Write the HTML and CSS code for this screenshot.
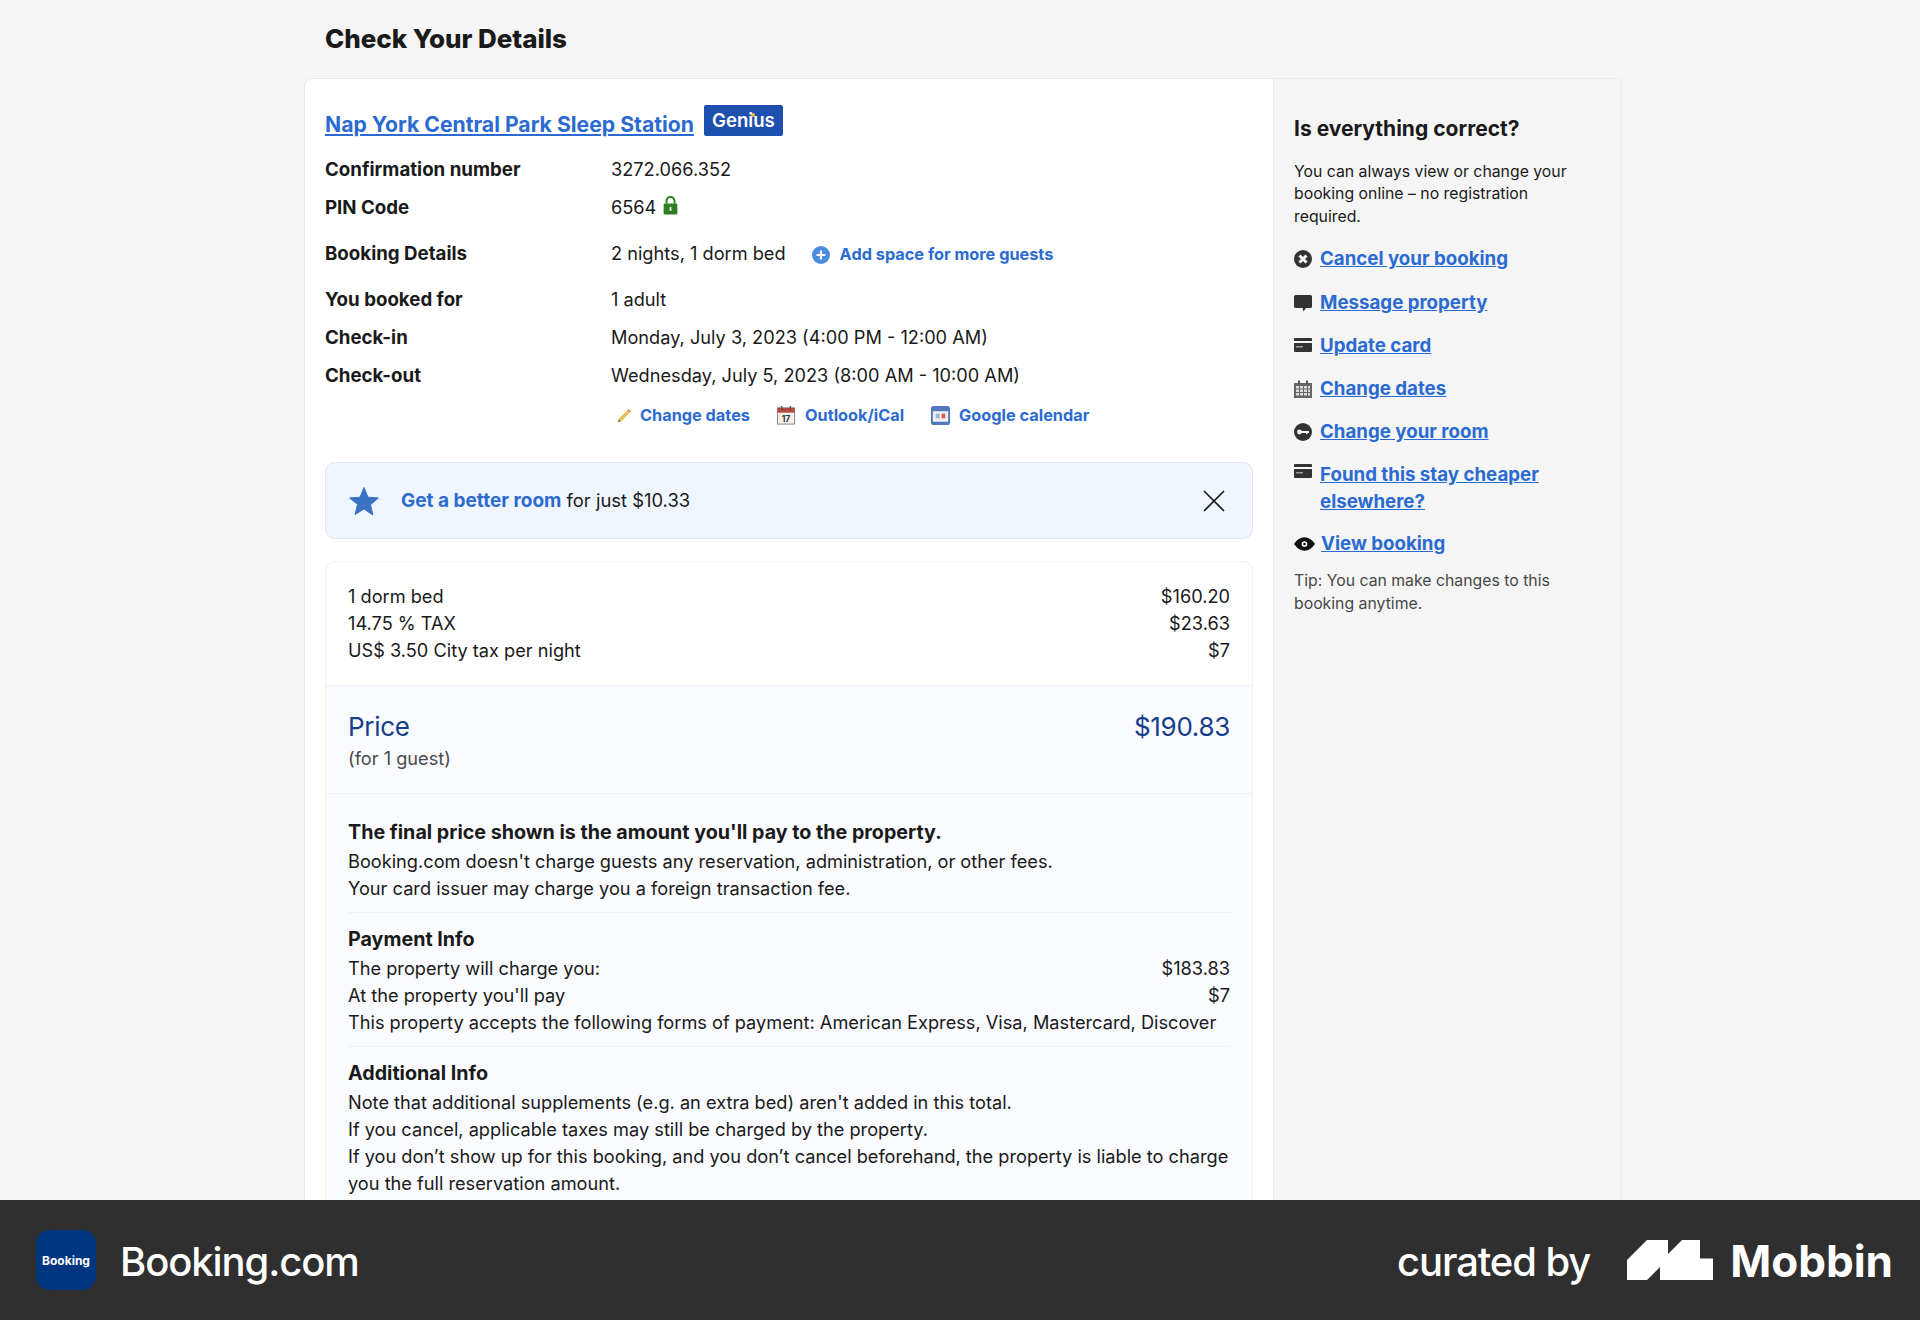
FILE: index.html
```html
<!DOCTYPE html>
<html lang="en">
<head>
  <meta charset="UTF-8">
  <title>Check Your Details</title>
  <link rel="stylesheet" href="styles.css">
</head>
<body>
  <main class="page">
    <h1 class="page-title">Check Your Details</h1>
    <div class="card">
      <section class="details">
        <div class="hotel">
          <a href="#" class="hotel-name">Nap York Central Park Sleep Station</a>
          <span class="genius">Genius<i class="genius-dot"></i></span>
        </div>

        <div class="row"><b>Confirmation number</b><span>3272.066.352</span></div>
        <div class="row"><b>PIN Code</b>
          <span class="inline">6564
            <svg class="lock" viewBox="0 0 14 18"><path d="M3.2 7V4.8a3.8 3.8 0 0 1 7.6 0V7" fill="none" stroke="#2f7d23" stroke-width="1.9"/><rect x="0.5" y="7" width="13" height="10.5" rx="1.2" fill="#2f7d23"/><rect x="6.2" y="10.5" width="1.6" height="3.6" fill="#fff"/></svg>
          </span>
        </div>
        <div class="row row-tall"><b>Booking Details</b>
          <span class="inline">2 nights, 1 dorm bed
            <a href="#" class="mini-link add-space">
              <svg class="plus" viewBox="0 0 18 18"><circle cx="9" cy="9" r="9" fill="#4b8be2"/><path d="M9 4.5v9M4.5 9h9" stroke="#fff" stroke-width="2.2"/></svg>
              Add space for more guests
            </a>
          </span>
        </div>
        <div class="row row-short"><b>You booked for</b><span>1 adult</span></div>
        <div class="row"><b>Check-in</b><span>Monday, July 3, 2023 (4:00 PM - 12:00 AM)</span></div>
        <div class="row"><b>Check-out</b><span>Wednesday, July 5, 2023 (8:00 AM - 10:00 AM)</span></div>

        <div class="actions">
          <a href="#" class="mini-link">
            <svg class="pencil" viewBox="0 0 16 16"><path d="M2.2 11.2 11.4 2l2.6 2.6-9.2 9.2-3.6 1z" fill="#e9bd52"/><path d="M11.4 2l1-1 2.6 2.6-1 1z" fill="#d77a5c"/><path d="M1.2 14.8l.7-2.6 1.9 1.9z" fill="#5b4a32"/></svg>
            Change dates
          </a>
          <a href="#" class="mini-link">
            <svg class="cal" viewBox="0 0 22 22"><rect x="1.5" y="3" width="18" height="17" fill="#f2efec" stroke="#8c8580"/><rect x="1.5" y="3" width="18" height="5" fill="#b5473c"/><path d="M6 1v4M15 1v4" stroke="#555" stroke-width="1.4"/><text x="10.5" y="17.5" class="cal-num">17</text></svg>
            Outlook/iCal
          </a>
          <a href="#" class="mini-link">
            <svg class="cal" viewBox="0 0 22 22"><rect x="1" y="1" width="20" height="20" rx="3" fill="#4f78bf"/><rect x="3" y="6.5" width="16" height="11" fill="#eef1f6"/><rect x="6" y="9" width="4" height="5" fill="#9db4d8"/><rect x="12" y="9" width="4" height="5" fill="#d9604c"/></svg>
            Google calendar
          </a>
        </div>

        <div class="upsell">
          <svg class="star" viewBox="0 0 30 30"><path d="M15 1.5l4 9.7 10.4.8-7.9 6.800 2.400 10.200L15 23l-8.900 5.500 2.400-10.200L.6 12l10.400-.8z" fill="#3a73c4" stroke="#3a73c4" stroke-linejoin="round"/></svg>
          <p><a href="#" class="upsell-link">Get a better room</a> for just $10.33</p>
          <svg class="close" viewBox="0 0 22 22"><path d="M1 1l20 20M21 1L1 21" stroke="#1a1a1a" stroke-width="1.700" fill="none"/></svg>
        </div>

        <div class="price-box">
          <div class="price-lines">
            <div class="line"><span>1 dorm bed</span><span>$160.20</span></div>
            <div class="line"><span>14.75 % TAX</span><span>$23.63</span></div>
            <div class="line"><span>US$ 3.50 City tax per night</span><span>$7</span></div>
          </div>
          <div class="price-total">
            <div class="total-main"><span>Price</span><span>$190.83</span></div>
            <div class="total-sub">(for 1 guest)</div>
          </div>
          <div class="price-info">
            <div class="info-block">
              <h3>The final price shown is the amount you'll pay to the property.</h3>
              <p>Booking.com doesn't charge guests any reservation, administration, or other fees.</p>
              <p>Your card issuer may charge you a foreign transaction fee.</p>
            </div>
            <div class="info-block">
              <h3>Payment Info</h3>
              <div class="line"><span>The property will charge you:</span><span>$183.83</span></div>
              <div class="line"><span>At the property you'll pay</span><span>$7</span></div>
              <p>This property accepts the following forms of payment: American Express, Visa, Mastercard, Discover</p>
            </div>
            <div class="info-block">
              <h3>Additional Info</h3>
              <p>Note that additional supplements (e.g. an extra bed) aren't added in this total.</p>
              <p>If you cancel, applicable taxes may still be charged by the property.</p>
              <p>If you don’t show up for this booking, and you don’t cancel beforehand, the property is liable to charge you the full reservation amount.</p>
            </div>
          </div>
        </div>
      </section>

      <aside class="side">
        <h2>Is everything correct?</h2>
        <p class="side-text">You can always view or change your booking online – no registration required.</p>
        <ul class="side-links">
          <li>
            <svg class="side-icon" viewBox="0 0 18 18"><circle cx="9" cy="9" r="9" fill="#333"/><path d="M5.500 5.500l7 7M12.500 5.500l-7 7" stroke="#f5f5f5" stroke-width="3"/></svg>
            <a href="#">Cancel your booking</a>
          </li>
          <li>
            <svg class="side-icon" viewBox="0 0 18 18"><path d="M1.500 1h15A1.500 1.500 0 0 1 18 2.500v10a1.500 1.500 0 0 1-1.500 1.500H12l-2.500 3.500-1-3.500h-7A1.500 1.500 0 0 1 0 12.500v-10A1.500 1.500 0 0 1 1.500 1z" fill="#333"/></svg>
            <a href="#">Message property</a>
          </li>
          <li>
            <svg class="side-icon" viewBox="0 0 18 18"><path d="M1 1h16a1 1 0 0 1 1 1v2H0V2a1 1 0 0 1 1-1zM0 6h18v8a1 1 0 0 1-1 1H1a1 1 0 0 1-1-1z" fill="#333"/><rect x="2" y="9" width="7" height="1.500" fill="#999"/></svg>
            <a href="#">Update card</a>
          </li>
          <li>
            <svg class="side-icon" viewBox="0 0 18 18"><path d="M0 3h18v15H0z" fill="#666"/><path d="M4 0.500h2V4H4zM12 0.500h2V4h-2z" fill="#555"/><path d="M2 6h3v2.400H2zM6 6h3v2.400H6zM10 6h3v2.400h-3zM14 6h2v2.400h-2zM2 9.500h3v2.400H2zM6 9.500h3v2.400H6zM10 9.500h3v2.400h-3zM14 9.500h2v2.400h-2zM2 13h3v2.600H2zM6 13h3v2.600H6zM10 13h3v2.600h-3zM14 13h2v2.600h-2z" fill="#ddd"/></svg>
            <a href="#">Change dates</a>
          </li>
          <li>
            <svg class="side-icon" viewBox="0 0 18 18"><circle cx="9" cy="9" r="9" fill="#333"/><circle cx="5.500" cy="9" r="2.400" fill="#f5f5f5"/><path d="M7 8h8v2h-1.500v1.200h-1.500V10H7z" fill="#f5f5f5"/></svg>
            <a href="#">Change your room</a>
          </li>
          <li class="side-link-top">
            <svg class="side-icon" viewBox="0 0 18 18"><path d="M1 1h16a1 1 0 0 1 1 1v2H0V2a1 1 0 0 1 1-1zM0 6h18v8a1 1 0 0 1-1 1H1a1 1 0 0 1-1-1z" fill="#333"/><rect x="2" y="9" width="7" height="1.500" fill="#999"/></svg>
            <a href="#">Found this stay cheaper elsewhere?</a>
          </li>
          <li>
            <svg class="eye-icon" viewBox="0 0 22 14"><path d="M0 7c3-4.500 6.800-7 11-7s8 2.500 11 7c-3 4.500-6.800 7-11 7S3 11.500 0 7z" fill="#111"/><circle cx="11" cy="7" r="3" fill="#f5f5f5"/><circle cx="11" cy="7" r="1.300" fill="#111"/></svg>
            <a href="#">View booking</a>
          </li>
        </ul>
        <p class="side-tip">Tip: You can make changes to this booking anytime.</p>
      </aside>
    </div>
  </main>

  <footer class="credit">
    <div class="credit-app">
      <div class="app-logo">Booking</div>
      <span class="app-name">Booking.com</span>
    </div>
    <div class="credit-by">
      <span class="curated">curated by</span>
      <svg class="mobbin-logo" viewBox="0 0 86 40"><path d="M0 40V20L20 0H41V14L55 0H73V18.500H86V40H53L66 27V40H33V27L20 40z" fill="#fff"/></svg>
      <span class="mobbin">Mobbin</span>
    </div>
  </footer>
</body>
</html>
```

FILE: styles.css
```css
* {
  box-sizing: border-box;
}

body {
  margin: 0;
  height: 1320px;
  display: flex;
  flex-direction: column;
  overflow: hidden;
  background: #f5f5f5;
  color: #1a1a1a;
  font-family: Inter, 'Liberation Sans', sans-serif;
  font-size: 18.2px;
  line-height: 27px;
}

h1, h2, h3, p, ul {
  margin: 0;
  padding: 0;
}

a {
  color: #2b6bd1;
}

.page {
  flex: 1;
  min-height: 0;
  overflow: hidden;
  width: 1318px;
  margin-left: 304px;
}

.page-title {
  height: 78px;
  padding-left: 21px;
  font-size: 26px;
  line-height: 78px;
  font-weight: 800;
  letter-spacing: -0.06px;
}

.card {
  display: flex;
  border-top: 1px solid #e9e9e9;
  border-left: 1px solid #e9e9e9;
  border-radius: 8px 8px 0 0;
}

/* left column */
.details {
  width: 968px;
  flex: none;
  padding: 0 20px;
  background: #fff;
  border-top-left-radius: 8px;
}

.hotel {
  display: flex;
  align-items: flex-end;
  gap: 10px;
  padding-top: 26px;
  margin-bottom: 12px;
}

.hotel-name {
  font-size: 21.2px;
  font-weight: 700;
  line-height: 28px;
}

.genius {
  position: relative;
  width: 79px;
  height: 31px;
  margin-bottom: 2px;
  background: #1d4fae;
  border-radius: 2px;
  color: #fff;
  font-size: 18.6px;
  font-weight: 600;
  line-height: 31px;
  text-align: center;
}

.genius-dot {
  position: absolute;
  top: 8px;
  left: 47px;
  width: 4px;
  height: 4px;
  border-radius: 50%;
  background: #f5c04a;
}

.row {
  display: grid;
  grid-template-columns: 286px 1fr;
  align-items: center;
  height: 38px;
}

.row b {
  font-size: 18.7px;
  font-weight: 700;
}

.row-tall {
  height: 55px;
}

.row-short {
  height: 37px;
}

.inline {
  display: flex;
  align-items: center;
  gap: 7px;
}

.lock {
  width: 15px;
  height: 19px;
  margin-top: -3px;
}

.mini-link {
  display: inline-flex;
  align-items: center;
  font-size: 16.3px;
  font-weight: 700;
  text-decoration: none;
}

.add-space {
  margin-top: 2px;
  margin-left: 19px;
  gap: 10px;
}

.plus {
  width: 18px;
  height: 18px;
}

.actions {
  display: flex;
  height: 42px;
  align-items: center;
  gap: 26px;
  padding-left: 292px;
}

.actions .mini-link {
  gap: 8px;
}

.pencil {
  width: 15px;
  height: 15px;
}

.cal {
  width: 21px;
  height: 21px;
}

.cal-num {
  font-size: 9px;
  font-weight: 700;
  fill: #333;
  text-anchor: middle;
}

.upsell {
  display: flex;
  align-items: center;
  height: 77px;
  margin-top: 26px;
  padding: 0 27px 0 23px;
  background: #f0f6ff;
  border: 1px solid #e1e6ed;
  border-radius: 10px;
}

.star {
  width: 30px;
  height: 30px;
  margin-right: 22px;
}

.upsell p {
  flex: 1;
  font-size: 18.4px;
}

.upsell-link {
  font-size: 19px;
  font-weight: 700;
  text-decoration: none;
}

.close {
  width: 22px;
  height: 22px;
}

/* price box */
.price-box {
  margin-top: 22px;
  border: 1px solid #eef1f6;
  border-bottom: none;
  border-radius: 10px 10px 0 0;
}

.line {
  display: flex;
  justify-content: space-between;
}

.price-lines {
  height: 124px;
  padding: 21px 22px 0;
  border-bottom: 1px solid #eef1f6;
}

.price-total {
  height: 108px;
  padding: 23px 22px 0;
  background: #f9fbfe;
  border-bottom: 1px solid #eef1f6;
}

.total-main {
  display: flex;
  justify-content: space-between;
  color: #163e8c;
  font-size: 26px;
  letter-spacing: -0.3px;
  line-height: 36px;
}

.total-sub {
  color: #4a4a4a;
}

.price-info {
  padding: 0 22px;
  background: #f9fbfe;
}

.info-block {
  padding: 13px 0 10px;
  border-bottom: 1px solid #eef1f6;
}

.info-block:first-child {
  padding-top: 25px;
}

.info-block:last-child {
  border-bottom: none;
}

.info-block h3 {
  margin-bottom: 2px;
  font-size: 19.7px;
  font-weight: 700;
}

/* right column */
.side {
  flex: 1;
  padding: 36px 20px 0 20px;
  border-left: 1px solid #e9e9e9;
  border-right: 1px solid #ebebeb;
}

.side h2 {
  margin-bottom: 18px;
  font-size: 21px;
  font-weight: 700;
  line-height: 28px;
}

.side-text,
.side-tip {
  font-size: 15.8px;
  line-height: 22.400px;
  width: 285px;
}

.side-links {
  list-style: none;
  margin-top: 17px;
}

.side-links li {
  display: flex;
  align-items: center;
  gap: 8px;
  margin-bottom: 16px;
  font-size: 18.7px;
  font-weight: 700;
  line-height: 27px;
}

.side-links li:first-child {
  margin-bottom: 17px;
}

.side-links .side-link-top {
  align-items: flex-start;
  margin-bottom: 15px;
}

.side-link-top a {
  width: 230px;
}

.side-link-top .side-icon {
  margin-top: 2px;
}

.side-icon {
  flex: none;
  width: 18px;
  height: 18px;
}

.eye-icon {
  flex: none;
  width: 21px;
  height: 14px;
  margin-right: -2px;
}

.side-tip {
  margin-top: -3px;
  color: #474747;
}

/* bottom bar */
.credit {
  flex: none;
  display: flex;
  justify-content: space-between;
  align-items: center;
  height: 120px;
  padding: 0 27px 0 36px;
  background: #2f2f2f;
  color: #fff;
}

.credit-app,
.credit-by {
  display: flex;
  align-items: center;
}

.app-logo {
  display: flex;
  justify-content: center;
  align-items: center;
  width: 60px;
  height: 60px;
  margin-right: 24px;
  background: #003580;
  border-radius: 14px;
  font-size: 12px;
  font-weight: 700;
}

.app-name {
  margin-top: 4px;
  font-size: 40px;
  font-weight: 500;
  letter-spacing: -1.1px;
  line-height: 50px;
}

.curated {
  margin-top: 4px;
  margin-right: 37px;
  font-size: 40px;
  font-weight: 500;
  letter-spacing: -1.1px;
  line-height: 50px;
}

.mobbin-logo {
  width: 86px;
  height: 40px;
  margin-right: 17px;
}

.mobbin {
  margin-top: 2px;
  font-size: 44px;
  font-weight: 700;
  line-height: 50px;
}
```
